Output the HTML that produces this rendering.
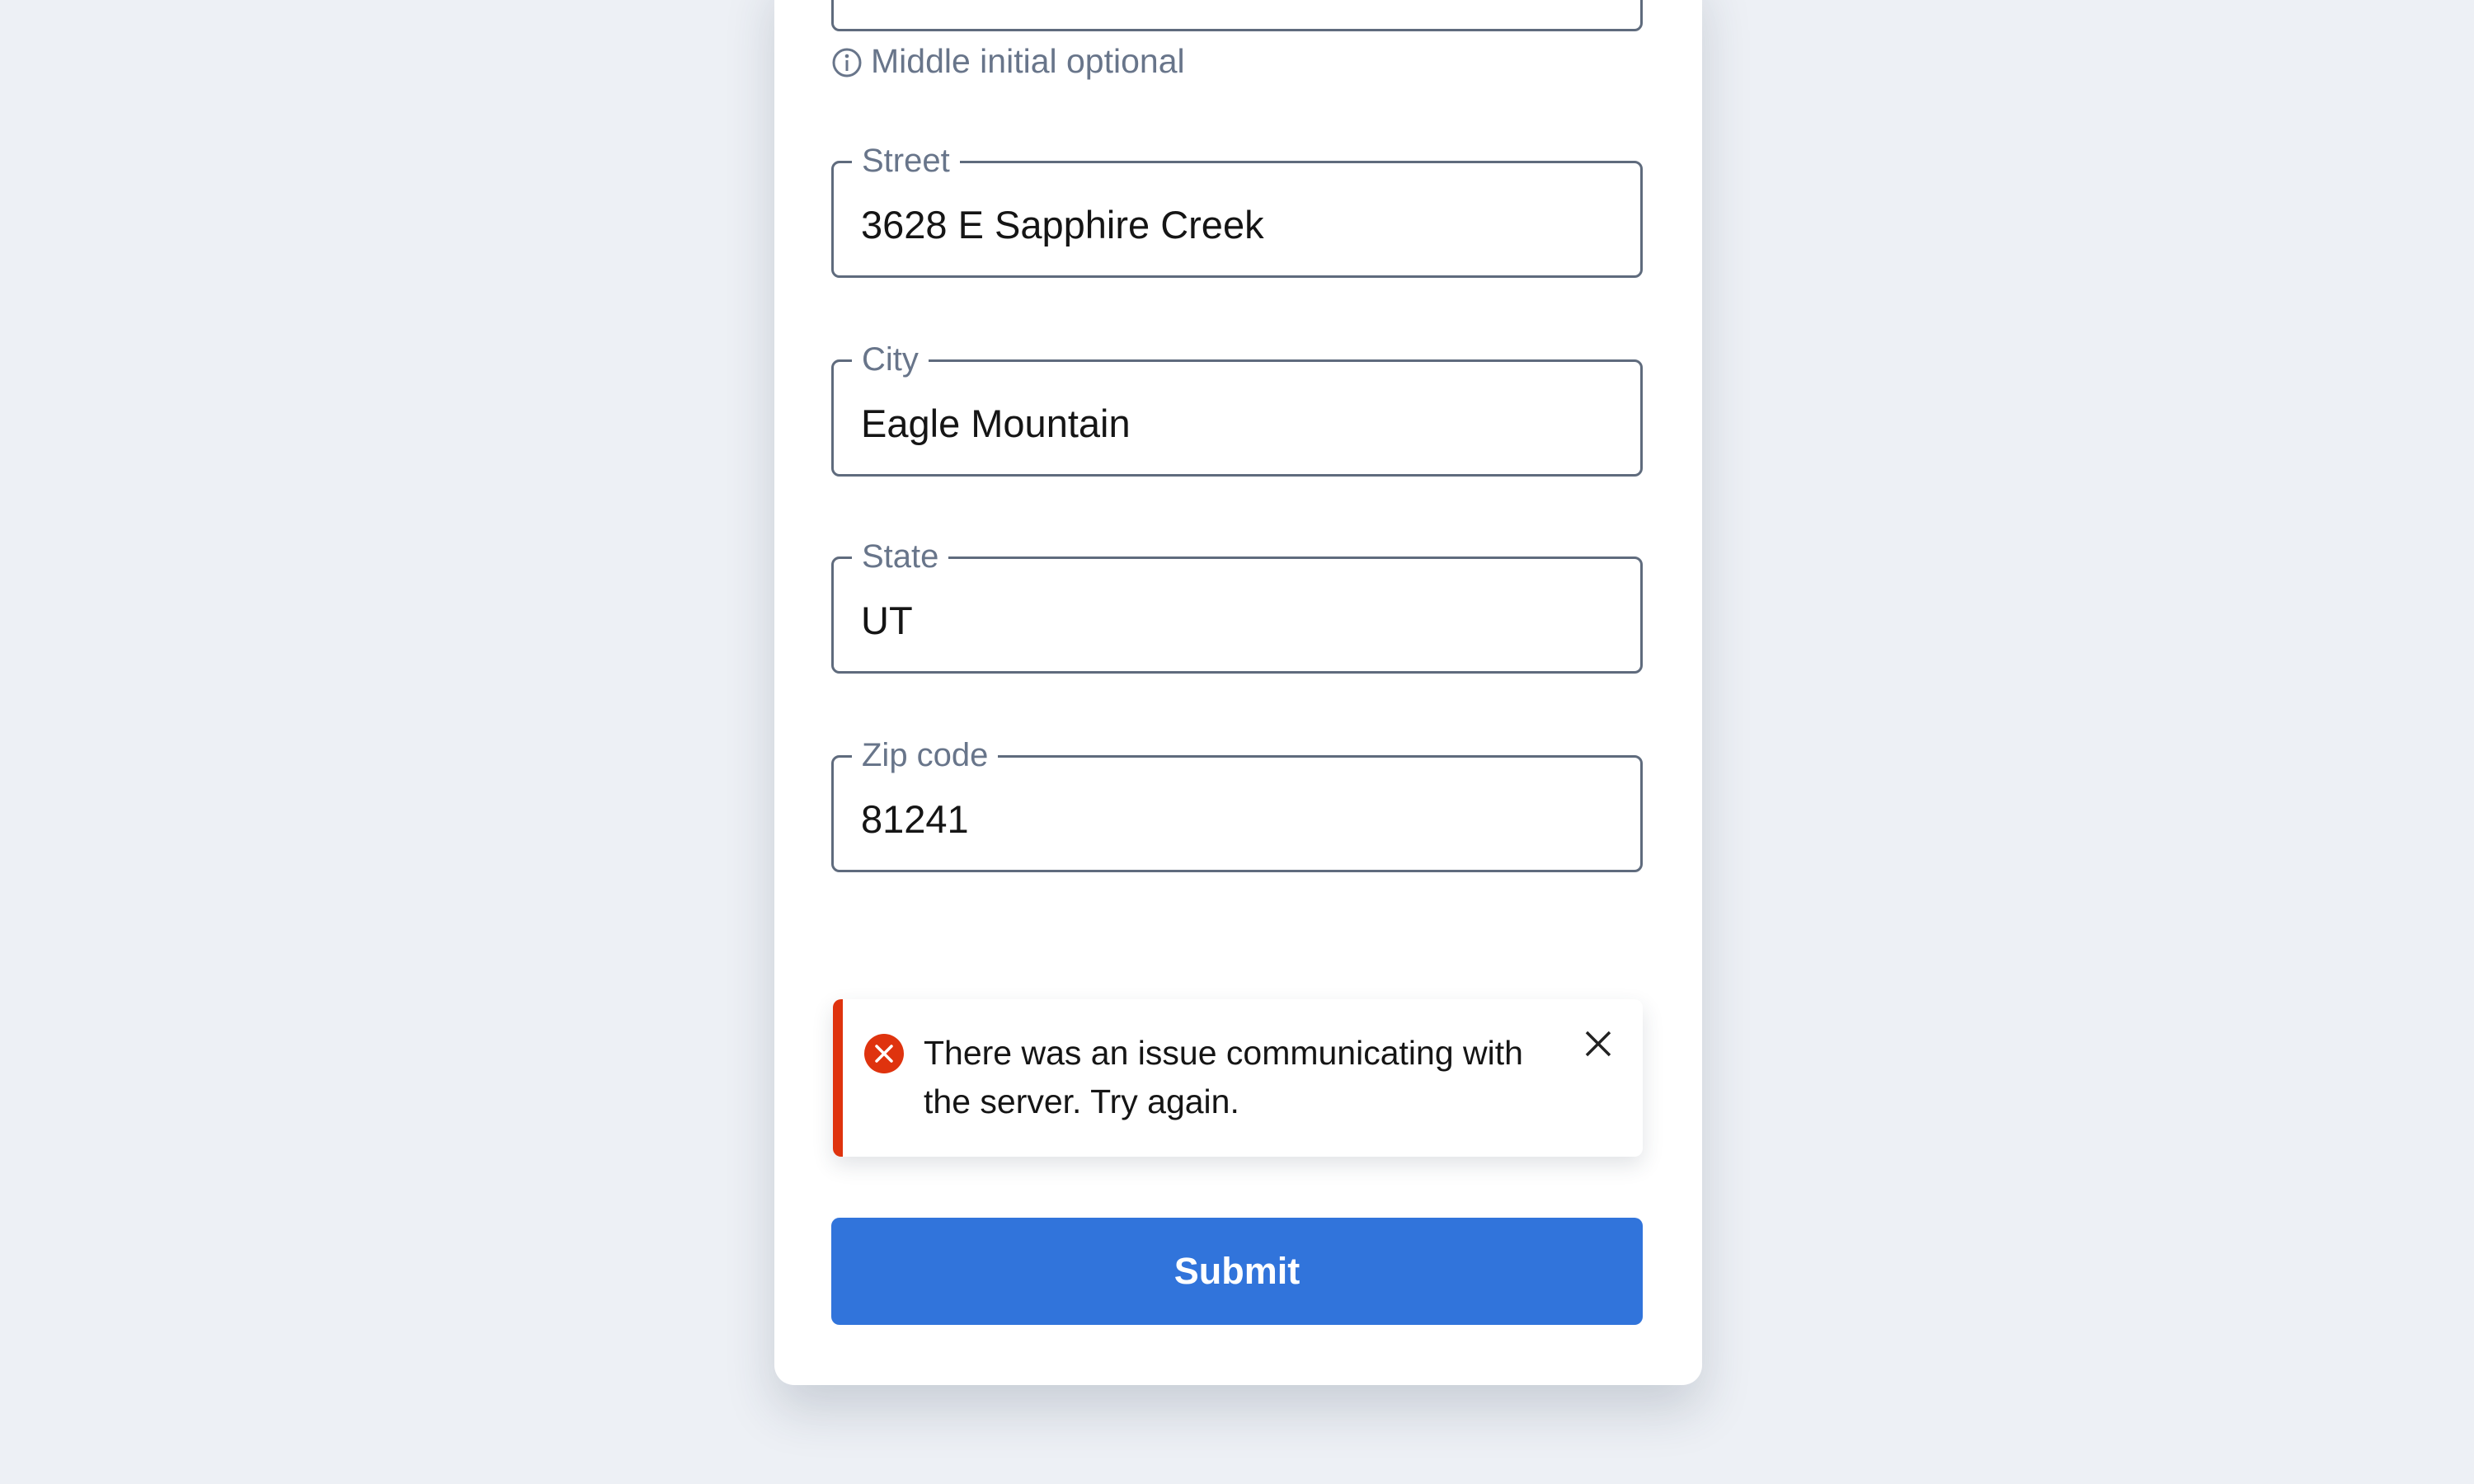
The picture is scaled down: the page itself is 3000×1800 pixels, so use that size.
<!DOCTYPE html>
<html><head><meta charset="utf-8"><style>
*{box-sizing:border-box;margin:0;padding:0}
body{width:3000px;height:1800px;background:#edf0f5;font-family:"Liberation Sans",sans-serif;position:relative;overflow:hidden}
.card{position:absolute;left:939px;top:-40px;width:1125px;height:1720px;background:#fff;border-radius:24px;box-shadow:0 30px 60px rgba(40,55,80,.18)}
.field{position:absolute;left:1008px;width:984px;height:142px;border:3px solid #5f6b7d;border-radius:10px}
.lbl{position:absolute;left:22px;top:-27px;background:#fff;padding:0 12px;color:#68758a;font-size:40px;line-height:48px}
.val{position:absolute;left:33px;top:48px;font-size:47px;color:#151515;line-height:54px}
.hint{position:absolute;left:1008px;top:50px;font-size:41px;color:#68758a;line-height:48px}
.alert{position:absolute;left:1010px;top:1212px;width:982px;height:191px;background:#fff;border-radius:10px;border-left:12px solid #df330e;box-shadow:0 10px 26px rgba(40,55,80,.14)}
.alert .t{position:absolute;left:98px;top:36px;font-size:41px;line-height:59px;color:#151515;width:760px}
.btn{position:absolute;left:1008px;top:1477px;width:984px;height:130px;background:#3174db;border-radius:10px;color:#fff;font-weight:bold;font-size:45px;text-align:center;line-height:130px}
</style></head><body>
<div class="card"></div>
<div class="field" style="top:-104px"></div>
<div class="hint"><svg width="38" height="38" viewBox="0 0 38 38" style="vertical-align:-7px;margin-right:10px"><circle cx="19" cy="19" r="16" fill="none" stroke="#68758a" stroke-width="3"/><circle cx="19" cy="11" r="2.3" fill="#68758a"/><rect x="17.5" y="16" width="3" height="13" fill="#68758a"/></svg>Middle initial optional</div>
<div class="field" style="top:195px"><span class="lbl">Street</span><span class="val">3628 E Sapphire Creek</span></div>
<div class="field" style="top:436px"><span class="lbl">City</span><span class="val">Eagle Mountain</span></div>
<div class="field" style="top:675px"><span class="lbl">State</span><span class="val">UT</span></div>
<div class="field" style="top:916px"><span class="lbl">Zip code</span><span class="val">81241</span></div>
<div class="alert">
<svg width="50" height="50" viewBox="0 0 50 50" style="position:absolute;left:25px;top:41px"><circle cx="25" cy="25" r="24" fill="#df330e"/><path d="M16 16L34 34M34 16L16 34" stroke="#fff" stroke-width="3.5" stroke-linecap="round"/></svg>
<div class="t">There was an issue communicating with<br>the server. Try again.</div>
<svg width="34" height="34" viewBox="0 0 34 34" style="position:absolute;left:899px;top:37px"><path d="M3 3L31 31M31 3L3 31" stroke="#222" stroke-width="3.5"/></svg>
</div>
<div class="btn">Submit</div>
</body></html>
